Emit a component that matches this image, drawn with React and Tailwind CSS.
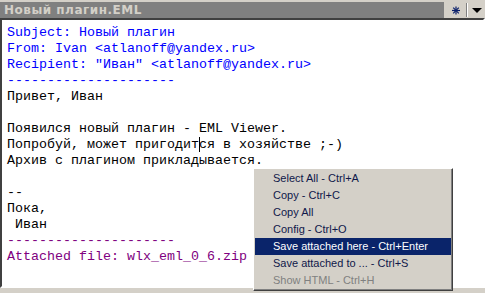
import React from 'react';

const mono = { fontFamily: '"Liberation Mono", "Courier New", monospace' };

const lines = [
  { text: 'Subject: Новый плагин', color: 'text-[#0000ff]' },
  { text: 'From: Ivan <atlanoff@yandex.ru>', color: 'text-[#0000ff]' },
  { text: 'Recipient: "Иван" <atlanoff@yandex.ru>', color: 'text-[#0000ff]' },
  { text: '---------------------', color: 'text-[#0000ff]' },
  { text: 'Привет, Иван', color: 'text-black' },
  { text: '', color: 'text-black' },
  { text: 'Появился новый плагин - EML Viewer.', color: 'text-black' },
  { text: 'cursor', color: 'text-black' },
  { text: 'Архив с плагином прикладывается.', color: 'text-black' },
  { text: '', color: 'text-black' },
  { text: '--', color: 'text-black' },
  { text: 'Пока,', color: 'text-black' },
  { text: ' Иван', color: 'text-black' },
  { text: '---------------------', color: 'text-[#800080]' },
  { text: 'Attached file: wlx_eml_0_6.zip', color: 'text-[#800080]' },
];

const menuItems = [
  { label: 'Select All - Ctrl+A' },
  { label: 'Copy - Ctrl+C' },
  { label: 'Copy All' },
  { label: 'Config - Ctrl+O' },
  { label: 'Save attached here - Ctrl+Enter', active: true },
  { label: 'Save attached to ... - Ctrl+S' },
  { label: 'Show HTML - Ctrl+H', disabled: true },
];

export default function App() {
  return (
    <div className="relative w-[485px] h-[293px] bg-[#d4d0c8] overflow-hidden">
      {/* title bar */}
      <div className="flex h-[18px] pt-[2px]">
        <div
          className="flex-1 bg-[#808080] pl-[4px] text-[12px] font-bold leading-[16px] tracking-[0.5px] text-[#d4d0c8]"
          style={{ fontFamily: '"DejaVu Sans", Tahoma, sans-serif' }}
        >
          Новый плагин.EML
        </div>
        <div className="w-[41px] flex items-center">
          <svg width="20" height="16" viewBox="0 0 20 16" className="ml-[2px]">
            <g stroke="#0a1f6a" strokeWidth="1.2">
              <line x1="10" y1="4.5" x2="10" y2="12.5" />
              <line x1="6" y1="8.5" x2="14" y2="8.5" />
              <line x1="7.2" y1="5.7" x2="12.8" y2="11.3" />
              <line x1="12.8" y1="5.7" x2="7.2" y2="11.3" />
            </g>
          </svg>
          <div className="w-[2px] h-[14px] border-l border-[#808080] bg-white" />
          <svg width="17" height="16" viewBox="0 0 17 16">
            <polygon points="4,6 14,6 9,11" fill="#000" />
          </svg>
        </div>
      </div>

      {/* message view */}
      <div className="h-[270px] border-t-2 border-l-2 border-t-[#404040] border-l-[#404040] border-b-2 border-r-2 border-b-[#ffffff] border-r-[#ffffff] shadow-[inset_-1px_-1px_0_#d4d0c8,inset_1px_1px_0_#808080]">
        <div className="h-full bg-white pt-[5px] pl-[5px] text-[13.33px] leading-[16px]" style={mono}>
          {lines.map((l, i) =>
            l.text === 'cursor' ? (
              <div key={i} className="whitespace-pre text-black">
                Попробуй, может пригодит<span className="border-l border-black -mr-[1px]" />ся в хозяйстве ;-)
              </div>
            ) : (
              <div key={i} className={`whitespace-pre h-[16px] ${l.color}`}>
                {l.text}
              </div>
            )
          )}
        </div>
      </div>

      {/* context menu */}
      <div
        className="absolute left-[253px] top-[168px] w-[200px] bg-[#d4d0c8] border border-t-white border-l-white border-b-[#404040] border-r-[#404040] p-[1px] shadow-[inset_-1px_-1px_0_#808080]"
        style={{ fontFamily: '"Liberation Sans", Tahoma, Arial, sans-serif' }}
      >
        {menuItems.map((m) => (
          <div
            key={m.label}
            className={`h-[17px] pl-[18px] text-[11px] leading-[17px] whitespace-nowrap ${
              m.active
                ? 'bg-[#0a246a] text-white'
                : m.disabled
                ? 'text-[#808080]'
                : 'text-[#10184a]'
            }`}
          >
            {m.label}
          </div>
        ))}
      </div>
    </div>
  );
}
